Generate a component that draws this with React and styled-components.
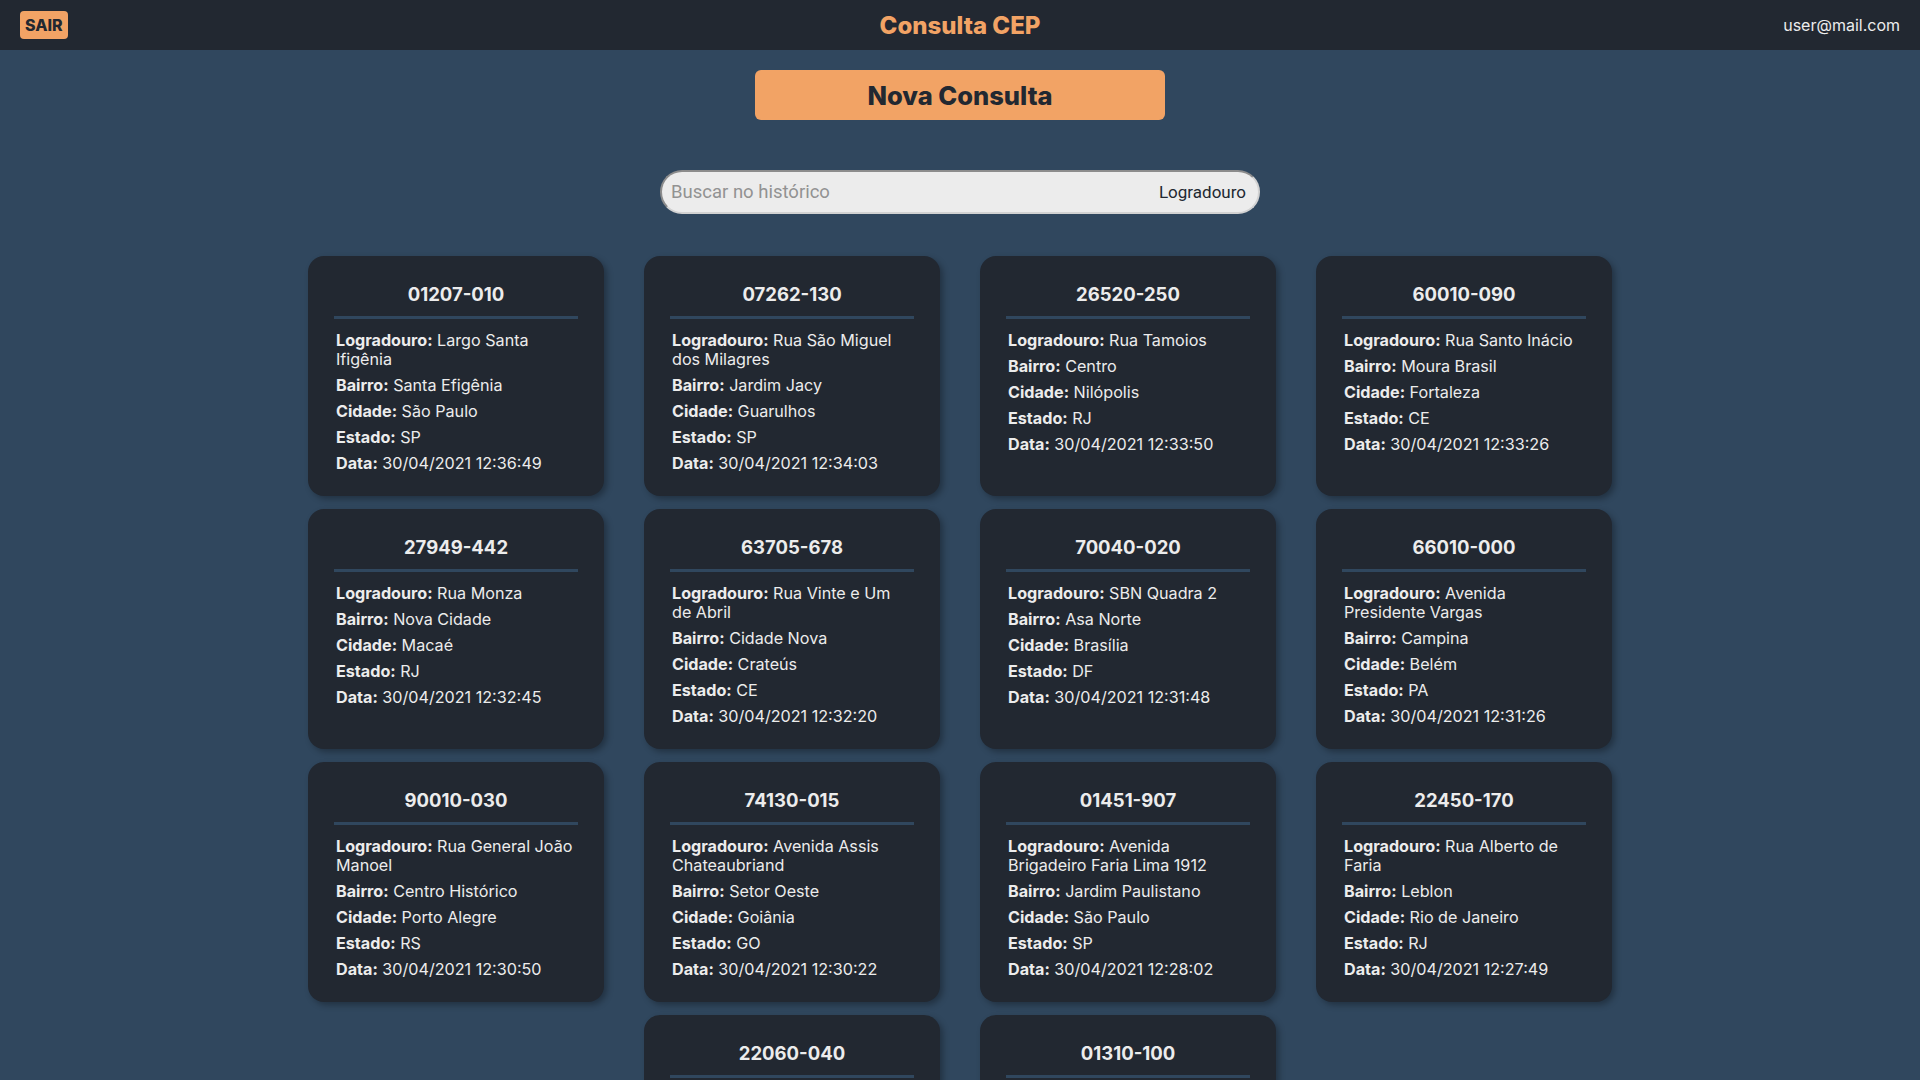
import React, { useState } from 'react';
import styled, { createGlobalStyle } from 'styled-components';

const GlobalStyle = createGlobalStyle`
  html, body {
    margin: 0;
    padding: 0;
    background: #30475e;
  }
  body {
    font-family: Inter, "Noto Sans", Arial, sans-serif;
    color: #ececec;
  }
  * {
    box-sizing: border-box;
  }
`;

const historico = [
  { cep: '01207-010', logradouro: 'Largo Santa Ifigênia', bairro: 'Santa Efigênia', cidade: 'São Paulo', estado: 'SP', data: '30/04/2021 12:36:49' },
  { cep: '07262-130', logradouro: 'Rua São Miguel dos Milagres', bairro: 'Jardim Jacy', cidade: 'Guarulhos', estado: 'SP', data: '30/04/2021 12:34:03' },
  { cep: '26520-250', logradouro: 'Rua Tamoios', bairro: 'Centro', cidade: 'Nilópolis', estado: 'RJ', data: '30/04/2021 12:33:50' },
  { cep: '60010-090', logradouro: 'Rua Santo Inácio', bairro: 'Moura Brasil', cidade: 'Fortaleza', estado: 'CE', data: '30/04/2021 12:33:26' },
  { cep: '27949-442', logradouro: 'Rua Monza', bairro: 'Nova Cidade', cidade: 'Macaé', estado: 'RJ', data: '30/04/2021 12:32:45' },
  { cep: '63705-678', logradouro: 'Rua Vinte e Um de Abril', bairro: 'Cidade Nova', cidade: 'Crateús', estado: 'CE', data: '30/04/2021 12:32:20' },
  { cep: '70040-020', logradouro: 'SBN Quadra 2', bairro: 'Asa Norte', cidade: 'Brasília', estado: 'DF', data: '30/04/2021 12:31:48' },
  { cep: '66010-000', logradouro: 'Avenida Presidente Vargas', bairro: 'Campina', cidade: 'Belém', estado: 'PA', data: '30/04/2021 12:31:26' },
  { cep: '90010-030', logradouro: 'Rua General João Manoel', bairro: 'Centro Histórico', cidade: 'Porto Alegre', estado: 'RS', data: '30/04/2021 12:30:50' },
  { cep: '74130-015', logradouro: 'Avenida Assis Chateaubriand', bairro: 'Setor Oeste', cidade: 'Goiânia', estado: 'GO', data: '30/04/2021 12:30:22' },
  { cep: '01451-907', logradouro: 'Avenida Brigadeiro Faria Lima 1912', bairro: 'Jardim Paulistano', cidade: 'São Paulo', estado: 'SP', data: '30/04/2021 12:28:02' },
  { cep: '22450-170', logradouro: 'Rua Alberto de Faria', bairro: 'Leblon', cidade: 'Rio de Janeiro', estado: 'RJ', data: '30/04/2021 12:27:49' },
  { cep: '22060-040', logradouro: 'Rua Xavier da Silveira', bairro: 'Copacabana', cidade: 'Rio de Janeiro', estado: 'RJ', data: '30/04/2021 12:26:15' },
  { cep: '01310-100', logradouro: 'Avenida Paulista', bairro: 'Bela Vista', cidade: 'São Paulo', estado: 'SP', data: '30/04/2021 12:25:37' },
];

const Header = styled.header`
  height: 50px;
  background: #222831;
  padding: 0 20px;
  display: grid;
  grid-template-columns: 1fr auto 1fr;
  align-items: center;
`;

const SairButton = styled.button`
  justify-self: start;
  height: 28px;
  padding: 0 5px;
  border: none;
  border-radius: 4px;
  background: #f2a365;
  color: #222831;
  font-family: Inter, sans-serif;
  font-size: 16px;
  font-weight: 800;
  cursor: pointer;
`;

const Title = styled.h1`
  margin: 0;
  font-size: 24px;
  font-weight: 800;
  color: #f2a365;
`;

const UserEmail = styled.span`
  justify-self: end;
  font-size: 16px;
  color: #ececec;
`;

const Main = styled.main`
  display: flex;
  flex-direction: column;
  align-items: center;
  padding: 20px 0 28px;
`;

const NovaConsulta = styled.button`
  width: 410px;
  height: 50px;
  border: none;
  border-radius: 6px;
  background: #f2a365;
  color: #222831;
  font-family: Inter, sans-serif;
  font-size: 25.5px;
  font-weight: 800;
  cursor: pointer;
`;

const SearchBar = styled.div`
  margin-top: 50px;
  width: 600px;
  height: 44px;
  display: flex;
  align-items: center;
  padding: 0 12px 0 9px;
  background: #ececec;
  border: 2px solid;
  border-color: #8c8c8c #d2d2d2 #d2d2d2 #8c8c8c;
  border-radius: 22px;
`;

const SearchInput = styled.input`
  flex: 1;
  border: none;
  outline: none;
  padding: 0;
  background: transparent;
  font-family: Roboto, "Liberation Sans", sans-serif;
  font-size: 18.5px;
  color: #222831;

  &::placeholder {
    color: #929292;
  }
`;

const SearchField = styled.select`
  border: none;
  outline: none;
  background: transparent;
  appearance: none;
  font-family: Roboto, "Liberation Sans", sans-serif;
  font-size: 17px;
  color: #222831;
  text-align: right;
`;

const CardList = styled.section`
  margin-top: 42px;
  width: 1304px;
  display: flex;
  flex-wrap: wrap;
  justify-content: center;
  gap: 13px 40px;
`;

const Card = styled.article`
  width: 296px;
  padding: 27px 26px 16px;
  background: #222831;
  border-radius: 16px;
  box-shadow: 3px 3px 6px rgba(0, 0, 0, 0.3);
`;

const Cep = styled.h3`
  margin: 0;
  font-size: 18.5px;
  line-height: 22px;
  font-weight: 700;
  text-align: center;
  color: #ececec;
`;

const Divider = styled.hr`
  margin: 11px 0 12px;
  height: 3px;
  border: none;
  background: #30475e;
`;

const Field = styled.p`
  margin: 0 0 7px;
  padding: 0 2px;
  font-size: 16.15px;
  line-height: 19px;
  color: #ececec;

  strong {
    font-weight: 700;
  }
`;

function CepCard({ item }) {
  return (
    <Card>
      <Cep>{item.cep}</Cep>
      <Divider />
      <Field><strong>Logradouro:</strong> {item.logradouro}</Field>
      <Field><strong>Bairro:</strong> {item.bairro}</Field>
      <Field><strong>Cidade:</strong> {item.cidade}</Field>
      <Field><strong>Estado:</strong> {item.estado}</Field>
      <Field><strong>Data:</strong> {item.data}</Field>
    </Card>
  );
}

export default function App() {
  const [busca, setBusca] = useState('');

  const lista = historico.filter((item) =>
    item.logradouro.toLowerCase().includes(busca.toLowerCase())
  );

  return (
    <>
      <GlobalStyle />
      <Header>
        <SairButton>SAIR</SairButton>
        <Title>Consulta CEP</Title>
        <UserEmail>user@mail.com</UserEmail>
      </Header>
      <Main>
        <NovaConsulta>Nova Consulta</NovaConsulta>
        <SearchBar>
          <SearchInput
            placeholder="Buscar no histórico"
            value={busca}
            onChange={(e) => setBusca(e.target.value)}
          />
          <SearchField defaultValue="logradouro">
            <option value="logradouro">Logradouro</option>
            <option value="bairro">Bairro</option>
            <option value="cidade">Cidade</option>
          </SearchField>
        </SearchBar>
        <CardList>
          {lista.map((item) => (
            <CepCard key={item.cep} item={item} />
          ))}
        </CardList>
      </Main>
    </>
  );
}
